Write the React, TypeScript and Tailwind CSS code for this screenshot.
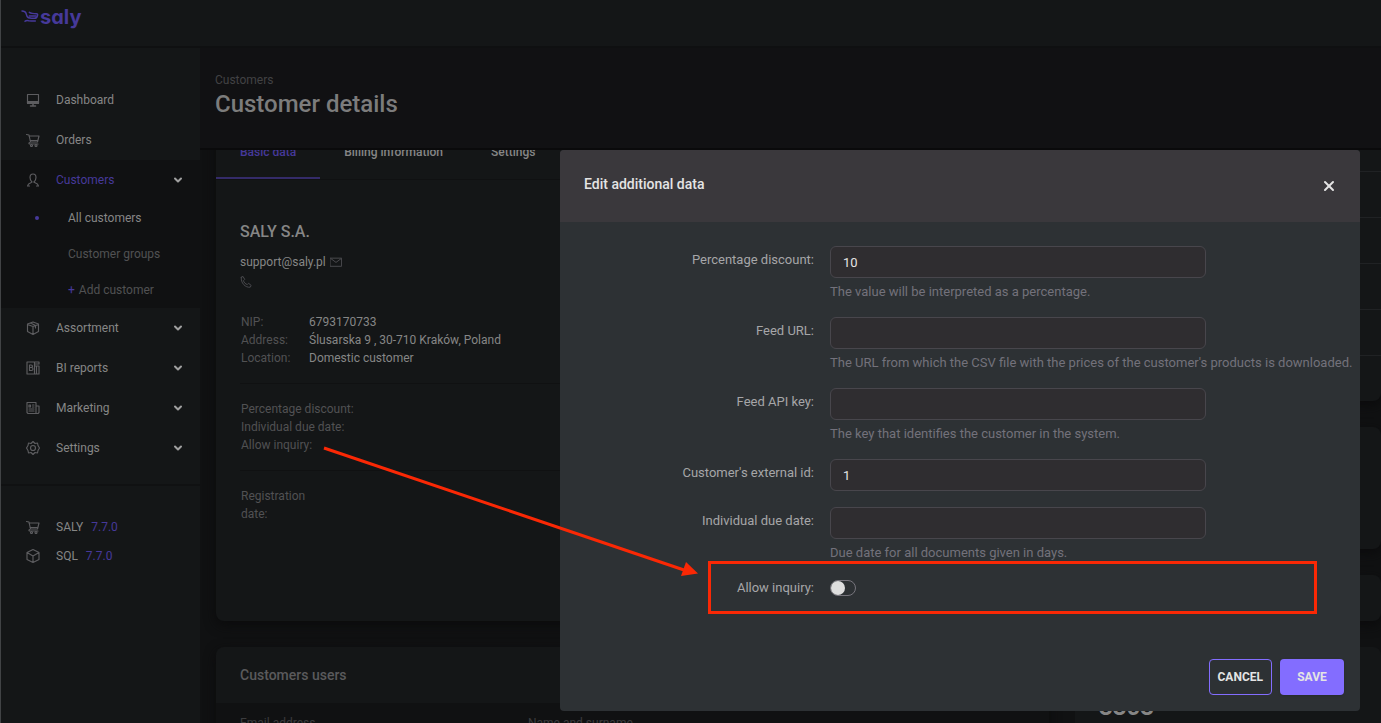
import { type ReactNode, useState } from "react";
import { ChevronDown, X } from "lucide-react";

type IconProps = {
  children: ReactNode;
  className?: string;
};

const Icon = ({ children, className = "size-3.5" }: IconProps) => (
  <svg
    viewBox="0 0 28 28"
    fill="none"
    stroke="currentColor"
    strokeWidth={2.3}
    strokeLinejoin="round"
    strokeLinecap="round"
    aria-hidden="true"
    className={className}
  >
    {children}
  </svg>
);

const MonitorIcon = () => (
  <Icon>
    <path d="M3 3h22v17H3z" />
    <path d="M3 17h22v4H3z" fill="currentColor" />
    <path d="M14 21v4M9 26h10" strokeWidth={3} />
  </Icon>
);

const CartIcon = () => (
  <Icon>
    <path d="M1 3l5 1 3 14h14l3-12H6M8 15h15M9 18c-4 1-4 4-1 4h16" />
    <circle cx="11" cy="25" r="2" />
    <circle cx="20" cy="25" r="2" />
  </Icon>
);

const UserIcon = () => (
  <Icon>
    <path d="M16 18c2-2 4-4 4-9 0-4-2-7-6-7s-6 3-6 7c0 5 2 7 4 9 0 2-8 1-9 8h4" />
    <path d="M16 18c0 2 8 1 9 8h-4" />
  </Icon>
);

const BoxIcon = () => (
  <Icon>
    <path d="M14 2l11 4v15l-11 6-11-6V6zM3 7l11 4 11-4M14 11v16M9 4l10 5v5" />
  </Icon>
);

const ReportsIcon = () => (
  <Icon>
    <path d="M2 2h15v24H2zM17 10h9v16h-9M18 2h8v4h-8M21 10v16" />
    <path d="M7 8h3c4 0 4 5 0 5H7zM7 13h4c4 0 4 6 0 6H7z" />
  </Icon>
);

const NewsIcon = () => (
  <Icon>
    <path d="M2 3h18v22H4l-2-2zM20 10h6v13l-2 2h-4" />
    <path d="M6 8h3v4H6zM13 8h3M13 12h3M6 16h10M6 20h10" />
  </Icon>
);

const GearIcon = () => (
  <Icon>
    <path d="M10 5l4-4 4 4 5-1 1 5 3 5-3 5-1 5-5-1-4 4-4-4-5 1-1-5-3-5 3-5 1-5z" />
    <circle cx="14" cy="14" r="5" />
  </Icon>
);

const CubeIcon = () => (
  <Icon>
    <path d="M14 1l12 6v14l-12 6-12-6V7zM2 7l12 7 12-7M14 14v13" />
  </Icon>
);

const Logo = () => (
  <a href="#" className="flex items-center gap-px text-[#46399a]">
    <svg
      viewBox="0 0 54 42"
      fill="none"
      stroke="currentColor"
      strokeWidth={4.5}
      strokeLinecap="round"
      strokeLinejoin="round"
      aria-hidden="true"
      className="h-3.5 w-[18px]"
    >
      <path d="M3 3c7 0 10 1 12 7l3 9c2 6 7 6 14 6h8c6 0 8-3 9-7l1-4c0-2-1-3-3-3-8 0-16 0-22-4" />
      <path d="M25 18h20M12 34c3-3 7-3 11-2 7 1 14 1 20 1" />
    </svg>
    <span className="font-[Inter,sans-serif] text-xl leading-6 font-bold [font-feature-settings:'cv11'_1]">saly</span>
  </a>
);

const customerLinks = ["All customers", "Customer groups", "Add customer"];

const sections = [
  { label: "Assortment", icon: <BoxIcon /> },
  { label: "BI reports", icon: <ReportsIcon /> },
  { label: "Marketing", icon: <NewsIcon /> },
  { label: "Settings", icon: <GearIcon /> },
];

type NavItemProps = {
  label: string;
  icon: ReactNode;
  active?: boolean;
  expandable?: boolean;
};

const NavItem = ({ label, icon, active, expandable }: NavItemProps) => (
  <a href="#" className="flex h-10 items-center pr-4 pl-[25px]">
    <span className="text-[#5d5d60]">{icon}</span>
    <span className={`ml-4 flex-1 ${active ? "text-[#46399a]" : "text-[#868686]"}`}>{label}</span>
    {expandable && <ChevronDown className="size-3 text-[#a0a0a0]" strokeWidth={4} />}
  </a>
);

const Sidebar = () => (
  <aside className="w-[199px] shrink-0 bg-[#141617] pt-8">
    <nav>
      <NavItem label="Dashboard" icon={<MonitorIcon />} />
      <NavItem label="Orders" icon={<CartIcon />} />
      <div className="bg-[#101112]">
        <NavItem label="Customers" icon={<UserIcon />} active expandable />
        {customerLinks.map((link, index) => (
          <a key={link} href="#" className="flex h-9 items-center pl-[34px]">
            <span className={`mr-[29px] size-1 rounded-full ${index === 0 ? "bg-[#46399a]" : ""}`} />
            {index === 2 && <span className="mr-1 text-[#46399a]">+</span>}
            <span className={index === 0 ? "text-[#868686]" : "text-[#515153]"}>{link}</span>
          </a>
        ))}
      </div>
      {sections.map((section) => (
        <NavItem key={section.label} {...section} expandable />
      ))}
    </nav>
    <div className="mt-4 border-t-2 border-[#101112] pt-[26px] pl-[25px]">
      <div className="flex h-[29px] items-center text-[#868686]">
        <span className="mr-4 text-[#5d5d60]"><CartIcon /></span>
        SALY <span className="ml-2 text-[#46399a]">7.7.0</span>
      </div>
      <div className="flex h-[29px] items-center text-[#868686]">
        <span className="mr-4 text-[#5d5d60]"><CubeIcon /></span>
        SQL <span className="ml-2 text-[#46399a]">7.7.0</span>
      </div>
    </div>
  </aside>
);

const CustomerCard = () => (
  <section className="-mt-[26px] h-[497px] rounded-lg bg-[#141617] shadow-[0_4px_12px_#0b0b0c]">
    <div role="tablist" className="flex h-14 border-b border-[#101112] font-medium">
      <button role="tab" aria-selected="true" className="border-b-2 border-[#342b69] px-6 pt-0.5 text-[#46399a]">
        Basic data
      </button>
      <button role="tab" aria-selected="false" className="border-b-2 border-transparent px-6 pt-0.5 text-[#868686]">
        Billing information
      </button>
      <button role="tab" aria-selected="false" className="border-b-2 border-transparent px-6 pt-0.5 text-[#868686]">
        Settings
      </button>
    </div>
    <div className="px-6 pt-10 text-[#868686]">
      <h2 className="text-base leading-6 font-medium">SALY S.A.</h2>
      <p className="mt-2 flex h-5 items-center gap-1">
        support@saly.pl
        <Icon className="size-3 text-[#4a4a4e]">
          <path d="M1 5h26v19H1zM2 6l12 9 12-9" />
        </Icon>
      </p>
      <Icon className="mt-1 size-3 text-[#4a4a4e]">
        <path d="M3 3l4-2 4 7-3 3c1 4 5 8 9 9l3-3 6 5-2 4C13 28 1 16 3 3z" />
      </Icon>
      <dl className="mt-[25px] grid grid-cols-[68px_1fr] px-px leading-[18px]">
        <dt className="text-[#515153]">NIP:</dt>
        <dd>6793170733</dd>
        <dt className="text-[#515153]">Address:</dt>
        <dd>Ślusarska 9 , 30-710 Kraków, Poland</dd>
        <dt className="text-[#515153]">Location:</dt>
        <dd>Domestic customer</dd>
      </dl>
      <div className="mt-4 border-t border-[#101112] px-px pt-4 leading-[18px] text-[#515153]">
        <p>Percentage discount:</p>
        <p>Individual due date:</p>
        <p>Allow inquiry:</p>
      </div>
      <div className="mt-4 border-t border-[#101112] px-px pt-4 leading-[18px] text-[#515153]">
        <p className="w-20">Registration date:</p>
      </div>
    </div>
  </section>
);

const UsersCard = () => (
  <section className="mt-[26px] rounded-lg bg-[#141617] shadow-[0_4px_12px_#0b0b0c]">
    <h2 className="px-6 py-4 text-sm leading-6 font-medium text-[#5a5a5c]">Customers users</h2>
    <table className="w-full table-fixed bg-[#101112] text-left text-[#3c3c3e]">
      <thead>
        <tr className="h-10">
          <th className="w-72 pl-6 font-normal">Email address</th>
          <th className="pl-6 font-normal">Name and surname</th>
        </tr>
      </thead>
    </table>
  </section>
);

const SideCards = () => (
  <div className="w-[306px] shrink-0 space-y-[26px]">
    <div className="h-[251px] rounded-b-lg bg-[#141617] pt-[21px] shadow-[0_4px_12px_#0b0b0c]">
      {[1, 2, 3, 4, 5].map((row) => (
        <div key={row} className="h-[46px] border-t border-[#202224]" />
      ))}
    </div>
    <div className="h-[122px] rounded-lg bg-[#141617] shadow-[0_4px_12px_#0b0b0c]" />
    <div className="h-[46px] rounded-lg bg-[#141617] shadow-[0_4px_12px_#0b0b0c]" />
    <div className="h-28 rounded-lg bg-[#141617] px-6 pt-11 text-2xl font-bold text-[#868686]">3303</div>
  </div>
);

type FieldProps = {
  id: string;
  label: string;
  value?: string;
  hint?: string;
};

const Field = ({ id, label, value = "", hint }: FieldProps) => (
  <div className="flex gap-4">
    <label htmlFor={id} className="w-[254px] shrink-0 text-right leading-7 text-[#a6a6a8]">
      {label}
    </label>
    <div>
      <input
        id={id}
        type="text"
        defaultValue={value}
        className="block h-8 w-[376px] rounded-md border border-[#48464c] bg-[#2f2d30] px-3 text-[#e4e4e4] outline-none"
      />
      {hint && <p className="mt-[5px] leading-[18px] whitespace-nowrap text-[#73717b]">{hint}</p>}
    </div>
  </div>
);

const EditDialog = () => {
  const [allowInquiry, setAllowInquiry] = useState(false);

  return (
    <div
      role="dialog"
      aria-labelledby="dialog-title"
      className="absolute top-[150px] right-[21px] w-[800px] overflow-hidden rounded bg-[#2d3134] text-[13px]"
    >
      <header className="flex h-[72px] items-center justify-between bg-[#3a383c] px-6 text-[#e4e4e4]">
        <h2 id="dialog-title" className="pb-1 text-sm font-medium">Edit additional data</h2>
        <button type="button" aria-label="Close" className="-mr-px">
          <X className="size-4" strokeWidth={3} />
        </button>
      </header>
      <form>
        <div className="flex flex-col gap-4 pt-6">
          <Field id="discount" label="Percentage discount:" value="10" hint="The value will be interpreted as a percentage." />
          <Field
            id="feed-url"
            label="Feed URL:"
            hint="The URL from which the CSV file with the prices of the customer's products is downloaded."
          />
          <Field id="api-key" label="Feed API key:" hint="The key that identifies the customer in the system." />
          <Field id="external-id" label="Customer's external id:" value="1" />
          <Field id="due-date" label="Individual due date:" hint="Due date for all documents given in days." />
          <div className="flex items-center gap-4">
            <label htmlFor="allow-inquiry" className="w-[254px] text-right leading-5 text-[#a6a6a8]">
              Allow inquiry:
            </label>
            <input
              id="allow-inquiry"
              type="checkbox"
              role="switch"
              checked={allowInquiry}
              onChange={(event) => setAllowInquiry(event.target.checked)}
              className="h-4 w-[26px] appearance-none rounded-full border border-[#77757d] before:block before:size-3.5 before:rounded-full before:bg-[#dedede] checked:before:translate-x-2.5"
            />
          </div>
        </div>
        <footer className="mt-[61px] flex justify-end gap-2 px-4 pb-4 text-xs font-bold text-[#e4e4e4]">
          <button type="button" className="h-9 rounded border border-[#836dff] px-2">CANCEL</button>
          <button type="submit" className="h-9 w-16 rounded bg-[#836dff] shadow-sm">SAVE</button>
        </footer>
      </form>
    </div>
  );
};

const Annotation = () => (
  <svg className="pointer-events-none absolute top-0 right-0" width="1381" height="723" aria-hidden="true">
    <rect x="709.5" y="562.5" width="606" height="50" fill="none" stroke="#fa2805" strokeWidth="3" />
    <path d="M324 448L684 570" stroke="#fa2805" strokeWidth="3" />
    <path d="M686 562l12 11.500-17 2.500z" fill="#fa2805" />
  </svg>
);

const App = () => (
  <div className="relative flex h-screen flex-col overflow-hidden border-l border-[#414345] bg-[#101112] font-[Roboto,sans-serif] text-xs">
    <header className="h-12 shrink-0 border-b-2 border-[#0f1011] bg-[#141617] pt-[5px] pl-5">
      <Logo />
    </header>
    <div className="flex min-h-0 flex-1">
      <Sidebar />
      <main className="flex min-w-0 flex-1 flex-col">
        <header className="h-[102px] shrink-0 border-b-2 border-[#0a0a0b] bg-[#111113] px-[15px] pt-[23px]">
          <p className="leading-[18px] text-[#424244]">Customers</p>
          <h1 className="text-2xl leading-[30px] font-medium text-[#7c7c7c]">Customer details</h1>
        </header>
        <div className="flex min-h-0 flex-1 gap-[26px] overflow-hidden pl-4">
          <div className="min-w-0 flex-1">
            <CustomerCard />
            <UsersCard />
          </div>
          <SideCards />
        </div>
      </main>
    </div>
    <EditDialog />
    <Annotation />
  </div>
);

export default App;
